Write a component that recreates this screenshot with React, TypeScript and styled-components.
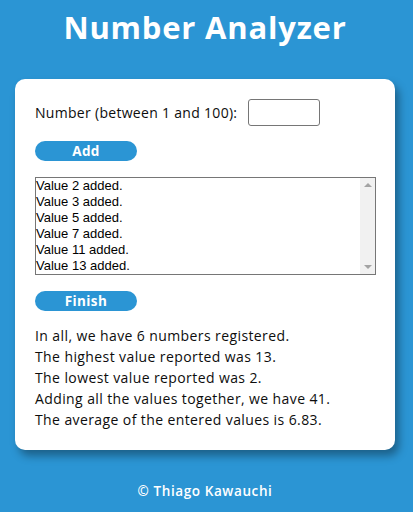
import React from 'react';
import styled, { createGlobalStyle } from 'styled-components';

const GlobalStyle = createGlobalStyle`
  html, body {
    margin: 0;
    padding: 0;
    background-color: #2b95d4;
    font-family: 'Open Sans', 'Noto Sans', sans-serif;
  }
`;

const Page = styled.div`
  display: flex;
  flex-direction: column;
  align-items: center;
  width: 410px;
  min-height: 512px;
`;

const Title = styled.h1`
  margin: 0 0 25px;
  height: 54px;
  line-height: 54px;
  font-size: 31px;
  font-weight: 700;
  letter-spacing: 0.8px;
  color: #ffffff;
`;

const Card = styled.section`
  width: 380px;
  box-sizing: border-box;
  background-color: #ffffff;
  border-radius: 10px;
  padding: 20px;
  box-shadow: 4px 6px 8px rgba(0, 0, 0, 0.35);
  display: flex;
  flex-direction: column;
`;

const Row = styled.div`
  display: flex;
  align-items: center;
  gap: 11px;
  height: 27px;
  font-size: 14px;
  letter-spacing: 0.3px;
  color: #0d0d0d;
`;

const NumberInput = styled.input`
  width: 72px;
  height: 27px;
  box-sizing: border-box;
  border: 1px solid #767676;
  border-radius: 3px;
  padding: 0 4px;
`;

const PillButton = styled.button<{ $gap: number }>`
  width: 102px;
  height: 20px;
  margin-top: ${p => p.$gap}px;
  border: none;
  border-radius: 10px;
  background-color: #2b95d4;
  color: #ffffff;
  font-family: inherit;
  font-size: 13.5px;
  font-weight: 700;
  letter-spacing: 0.4px;
  line-height: 20px;
  padding: 0;
  cursor: pointer;
`;

const ListBox = styled.div`
  margin-top: 16px;
  width: 341px;
  height: 98px;
  box-sizing: border-box;
  border: 1px solid #767676;
  display: flex;
  background: #fff;
`;

const Options = styled.div`
  flex: 1;
  display: flex;
  flex-direction: column;
  font-family: 'Liberation Sans', Arial, sans-serif;
  font-size: 13px;
  color: #000;
`;

const OptionRow = styled.div`
  height: 16px;
  line-height: 16px;
`;

const ScrollTrack = styled.div`
  width: 15px;
  background: #f1f1f1;
  display: flex;
  flex-direction: column;
  justify-content: space-between;
  align-items: center;
  padding: 5px 0;
  box-sizing: border-box;
`;

const Arrow = styled.div<{ $down?: boolean }>`
  width: 0;
  height: 0;
  border-left: 4px solid transparent;
  border-right: 4px solid transparent;
  ${p => (p.$down ? 'border-top: 4px solid #a3a3a3;' : 'border-bottom: 4px solid #a3a3a3;')}
`;

const Results = styled.div`
  margin-top: 14px;
  font-size: 14px;
  line-height: 21px;
  letter-spacing: 0.4px;
  color: #0d0d0d;
`;

const Footer = styled.footer`
  margin-top: 31px;
  height: 20px;
  line-height: 20px;
  font-size: 13.5px;
  font-weight: 600;
  letter-spacing: 0.6px;
  color: #ffffff;
`;

const values = [2, 3, 5, 7, 11, 13];

export default function App() {
  const total = values.reduce((a, b) => a + b, 0);
  const avg = (total / values.length).toFixed(2);
  return (
    <>
      <GlobalStyle />
      <Page>
        <Title>Number Analyzer</Title>
        <Card>
          <Row>
            <label htmlFor="num">Number (between 1 and 100):</label>
            <NumberInput id="num" type="text" />
          </Row>
          <PillButton $gap={15}>Add</PillButton>
          <ListBox>
            <Options>
              {values.map(v => (
                <OptionRow key={v}>Value {v} added.</OptionRow>
              ))}
            </Options>
            <ScrollTrack>
              <Arrow />
              <Arrow $down />
            </ScrollTrack>
          </ListBox>
          <PillButton $gap={16}>Finish</PillButton>
          <Results>
            <div>In all, we have {values.length} numbers registered.</div>
            <div>The highest value reported was {Math.max(...values)}.</div>
            <div>The lowest value reported was {Math.min(...values)}.</div>
            <div>Adding all the values together, we have {total}.</div>
            <div>The average of the entered values is {avg}.</div>
          </Results>
        </Card>
        <Footer>© Thiago Kawauchi</Footer>
      </Page>
    </>
  );
}
